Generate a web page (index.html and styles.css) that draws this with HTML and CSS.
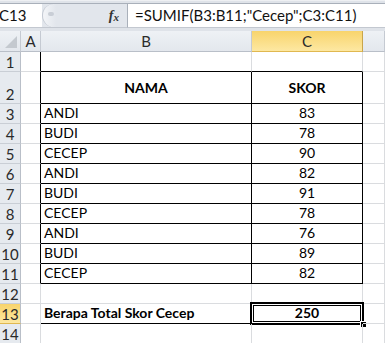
FILE: index.html
```html
<!DOCTYPE html>
<html>
<head>
<meta charset="utf-8">
<link rel="stylesheet" href="styles.css">
</head>
<body>
<div class="app">
  <div class="fbar">
    <div class="namebox">C13</div>
    <div class="mid"><span class="knob"></span><span class="fx">f<sub>x</sub></span></div>
    <div class="formula">=SUMIF(B3:B11;"Cecep";C3:C11)</div>
  </div>
  <div class="sheet">
    <div class="h corner"></div><div class="h">A</div><div class="h">B</div><div class="h hsel">C</div><div class="h"></div>

    <div class="rh">1</div><div class="c tb-l"></div><div class="c tb-top"></div><div class="c tb-top"></div><div class="c"></div>

    <div class="rh">2</div><div class="c tb-l"></div><div class="c t vmid bold ctr">NAMA</div><div class="c t vmid bold ctr">SKOR</div><div class="c"></div>

    <div class="rh">3</div><div class="c tb-l"></div><div class="c t">ANDI</div><div class="c t ctr">83</div><div class="c"></div>
    <div class="rh">4</div><div class="c tb-l"></div><div class="c t">BUDI</div><div class="c t ctr">78</div><div class="c"></div>
    <div class="rh">5</div><div class="c tb-l"></div><div class="c t">CECEP</div><div class="c t ctr">90</div><div class="c"></div>
    <div class="rh">6</div><div class="c tb-l"></div><div class="c t">ANDI</div><div class="c t ctr">82</div><div class="c"></div>
    <div class="rh">7</div><div class="c tb-l"></div><div class="c t">BUDI</div><div class="c t ctr">91</div><div class="c"></div>
    <div class="rh">8</div><div class="c tb-l"></div><div class="c t">CECEP</div><div class="c t ctr">78</div><div class="c"></div>
    <div class="rh">9</div><div class="c tb-l"></div><div class="c t">ANDI</div><div class="c t ctr">76</div><div class="c"></div>
    <div class="rh">10</div><div class="c tb-l"></div><div class="c t">BUDI</div><div class="c t ctr">89</div><div class="c"></div>
    <div class="rh">11</div><div class="c tb-l"></div><div class="c t">CECEP</div><div class="c t ctr">82</div><div class="c"></div>

    <div class="rh">12</div><div class="c"></div><div class="c"></div><div class="c"></div><div class="c"></div>

    <div class="rh rsel">13</div><div class="c"></div><div class="c ub bold">Berapa Total Skor Cecep</div><div class="c selcell bold ctr">250<span class="sel"></span><span class="handle"></span></div><div class="c"></div>

    <div class="rh">14</div><div class="c"></div><div class="c"></div><div class="c"></div><div class="c"></div>
  </div>
</div>
</body>
</html>
```

FILE: styles.css
```css
* { box-sizing: border-box; }
html, body { margin: 0; padding: 0; background: #fff; }
body { width: 385px; height: 343px; overflow: hidden; font-family: Lato, "Open Sans", sans-serif; font-size: 14px; color: #000; }

.fbar {
  height: 31px;
  background: #dfe3e9;
  border-top: 1px solid #eef0f3;
  padding: 2px 0 3px 0;
  display: flex;
}
.namebox, .mid, .formula {
  border-top: 1px solid #a9b0ba;
  border-bottom: 1px solid #c3c8d0;
}
.namebox {
  width: 42px;
  background: #fff;
  line-height: 23px;
  color: #111;
  font-size: 15px;
  overflow: hidden;
  text-indent: -1px;
}
.mid {
  width: 86px;
  background: #e2e6ec;
  border-right: 1px solid #a9b0ba;
  display: flex;
  align-items: center;
  justify-content: space-between;
  padding-right: 8px;
}
.knob {
  width: 14px;
  height: 23px;
  border-radius: 12px 0 0 12px;
  background: linear-gradient(90deg, #f3f5f8, #e2e6ec);
  border-left: 1px solid #c3c9d2;
  position: relative;
}
.knob::after {
  content: "";
  position: absolute;
  left: 5px; top: 8px;
  width: 6px; height: 4px;
  border-radius: 3px;
  background: #c9ced6;
}
.fx {
  font-family: "Liberation Serif", serif;
  font-style: italic;
  font-weight: bold;
  font-size: 14px;
  color: #333;
}
.fx sub { font-size: 11px; vertical-align: -1px; }
.formula {
  flex: 1;
  background: #fff;
  padding-left: 7px;
  line-height: 23px;
  font-size: 15px;
  color: #111;
}

.sheet {
  display: grid;
  grid-template-columns: 21px 20px 211px 111px 1fr;
  grid-template-rows: 21px 20px 32px repeat(12, 20px);
}
.h {
  background: linear-gradient(#eef1f5, #e3e7ed);
  border-right: 1px solid #c5cad2;
  border-bottom: 1px solid #b9bfc8;
  display: flex;
  align-items: center;
  justify-content: center;
  color: #2a2a2a;
  font-size: 15px;
}
.corner { position: relative; }
.corner::after {
  content: "";
  position: absolute;
  right: 3px; bottom: 3px;
  width: 0; height: 0;
  border-left: 12px solid transparent;
  border-bottom: 12px solid #c4c9cf;
}
.hsel {
  background: linear-gradient(#f8d46c, #fde8a2);
  border-right-color: #c9a54a;
  border-bottom-color: #e0b850;
}
.rh {
  background: #e6eaef;
  border-right: 1px solid #b9bfc8;
  border-bottom: 1px solid #c9ced5;
  display: flex;
  align-items: flex-end;
  justify-content: center;
  color: #2a2a2a;
  font-size: 15px;
  line-height: 18px;
}
.rsel {
  background: linear-gradient(#f8d46c, #fde8a2);
  border-bottom-color: #e0b850;
}
.c {
  border-right: 1px solid #dadcdf;
  border-bottom: 1px solid #dadcdf;
  display: flex;
  align-items: flex-end;
  padding: 0 3px 1px 3px;
  line-height: 18px;
  white-space: nowrap;
  position: relative;
}
.tb-l { border-right-color: #000; }
.tb-top { border-bottom-color: #000; }
.t { border-right-color: #000; border-bottom-color: #000; }
.ub { border-bottom-color: #000; }
.c.vmid { align-items: center; padding-bottom: 0; }
.bold { font-weight: bold; }
.ctr { justify-content: center; }

.selcell { border-right-color: #000; border-bottom-color: #000; }
.sel {
  position: absolute;
  left: -2px; top: -2px; right: -2px; bottom: -2px;
  border: 2px solid #000;
}
.sel::before {
  content: "";
  position: absolute;
  inset: 0;
  border: 1px solid #fff;
}
.sel::after {
  content: "";
  position: absolute;
  inset: 1px;
  border: 1px solid #000;
}
.handle {
  position: absolute;
  right: -5px; bottom: -5px;
  width: 7px; height: 7px;
  background: #000;
  border: 1px solid #fff;
}
```
